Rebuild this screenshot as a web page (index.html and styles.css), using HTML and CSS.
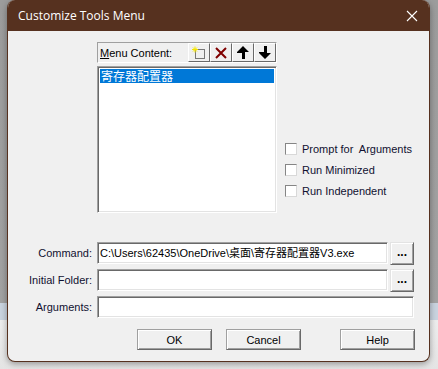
FILE: index.html
```html
<!DOCTYPE html>
<html lang="en">
<head>
  <meta charset="UTF-8">
  <title>Customize Tools Menu</title>
  <link rel="stylesheet" href="styles.css">
</head>
<body>

  <div class="dialog">
    <div class="titlebar">
      <span class="title">Customize Tools Menu</span>
      <svg class="close" width="12" height="12" viewBox="0 0 12 12">
        <path d="M1 1 L11 11 M11 1 L1 11" stroke="#fff" stroke-width="1.1"/>
      </svg>
    </div>

    <div class="client">
      <div class="top">
        <div class="listpane">
          <div class="listhead">
            <span class="listlabel"><u>M</u>enu Content:</span>
            <div class="tools">
              <button class="tool" title="New">
                <svg width="14" height="14" viewBox="0 0 14 14">
                  <rect x="3.5" y="3.5" width="9" height="9" fill="none" stroke="#000" stroke-dasharray="1 1"/>
                  <path d="M0 3.5 H6 M3 0.5 V6.5 M1 1.5 L5 5.5 M5 1.5 L1 5.5" stroke="#f5e600" stroke-width="1"/>
                </svg>
              </button>
              <button class="tool" title="Delete">
                <svg width="14" height="14" viewBox="0 0 14 14">
                  <path d="M2 2 L12 12 M12 2 L2 12" stroke="#800000" stroke-width="2"/>
                </svg>
              </button>
              <button class="tool" title="Move Up">
                <svg width="12" height="13" viewBox="0 0 12 13">
                  <polygon points="6,0 12,6 8,6 8,13 5,13 5,7 0,7 0,6" fill="#000"/>
                </svg>
              </button>
              <button class="tool" title="Move Down">
                <svg width="12" height="13" viewBox="0 0 12 13">
                  <polygon points="6,13 12,7 8,7 8,0 5,0 5,6 0,6 0,7" fill="#000"/>
                </svg>
              </button>
            </div>
          </div>
          <div class="listbox">
            <div class="item selected">寄存器配置器</div>
          </div>
        </div>

        <div class="options">
          <label class="check"><span class="box"></span>Prompt for&nbsp; Arguments</label>
          <label class="check"><span class="box"></span>Run Minimized</label>
          <label class="check"><span class="box"></span>Run Independent</label>
        </div>
      </div>

      <div class="fields">
        <label class="field-label">Command:</label>
        <div class="edit">C:\Users\62435\OneDrive\桌面\寄存器配置器V3.exe</div>
        <button class="browse">...</button>

        <label class="field-label">Initial Folder:</label>
        <div class="edit"></div>
        <button class="browse">...</button>

        <label class="field-label">Arguments:</label>
        <div class="edit wide"></div>
      </div>

      <div class="actions">
        <button class="push ok">OK</button>
        <button class="push cancel">Cancel</button>
        <button class="push help">Help</button>
      </div>
    </div>
  </div>

</body>
</html>
```

FILE: styles.css
```css
body {
  margin: 0;
  width: 438px;
  height: 369px;
  overflow: hidden;
  font-family: "Liberation Sans", Arial, sans-serif;
  font-size: 11px;
  color: #000;
  background:
    linear-gradient(to bottom,
      #9c9c9c 0, #a2a2a2 303px,
      #c9d3df 303px, #c9d3df 320px,
      #ededed 320px, #e4e4e4 369px);
}

.dialog {
  margin-left: 7px;
  width: 423px;
  height: 362px;
  box-sizing: border-box;
  border: 1px solid #56311f;
  border-top: none;
  border-radius: 8px;
  overflow: hidden;
  background: #f0f0f0;
  box-shadow: 0 2px 6px rgba(0,0,0,0.35);
}

.titlebar {
  height: 31px;
  background: #56311f;
  display: flex;
  align-items: center;
  padding: 0 10px 0 10px;
}

.title {
  font-family: "Open Sans", "Noto Sans", sans-serif;
  font-size: 12px;
  color: #fff;
  flex: 1;
}

.close {
  margin-right: 1px;
}

.client {
  padding-top: 11px;
}

.top {
  display: flex;
  margin-left: 89px;
}

.listpane {
  width: 180px;
}

.listhead {
  height: 21px;
  box-sizing: border-box;
  border: 1px solid;
  border-color: #a0a0a0 #fff #fff #a0a0a0;
  display: flex;
  align-items: center;
}

.listlabel {
  padding-left: 2px;
  flex: 1;
  font-size: 11px;
}

.tools {
  display: flex;
  height: 19px;
}

.tool {
  width: 22px;
  height: 19px;
  padding: 0;
  margin: 0;
  background: #f0f0f0;
  border: 1px solid;
  border-color: #fff #696969 #696969 #fff;
  display: flex;
  align-items: center;
  justify-content: center;
}

.listbox {
  margin-top: 3px;
  height: 147px;
  box-sizing: border-box;
  border: 1px solid;
  border-color: #a0a0a0 #fff #fff #a0a0a0;
  box-shadow: inset 1px 1px #696969, inset -1px -1px #e3e3e3;
  background: #fff;
  padding: 2px 2px;
}

.item {
  height: 14px;
  line-height: 14px;
  font-family: "Noto Sans CJK SC", sans-serif;
  font-size: 12px;
  padding-left: 1px;
}

.item.selected {
  background: #0078d7;
  color: #fff;
}

.options {
  margin-left: 8px;
  margin-top: 96px;
  display: flex;
  flex-direction: column;
}

.check {
  height: 21px;
  display: flex;
  align-items: center;
  color: #101030;
}

.box {
  width: 12px;
  height: 12px;
  box-sizing: border-box;
  background: #fff;
  border: 1px solid;
  border-color: #858585 #d8d8d8 #d8d8d8 #858585;
  margin-right: 5px;
}

.fields {
  margin-top: 29px;
  padding-right: 15px;
  display: grid;
  grid-template-columns: 89px 1fr 26px;
  row-gap: 4px;
}

.field-label {
  text-align: right;
  padding-right: 5px;
  line-height: 22px;
  color: #101030;
}

.edit {
  height: 22px;
  box-sizing: border-box;
  border: 1px solid;
  border-color: #a0a0a0 #fff #fff #a0a0a0;
  box-shadow: inset 1px 1px #696969, inset -1px -1px #e3e3e3;
  background: #fff;
  padding: 0 2px;
  line-height: 20px;
  font-family: "Liberation Sans", "Noto Sans CJK SC", sans-serif;
  white-space: nowrap;
  overflow: hidden;
}

.edit.wide {
  grid-column: 2 / 4;
}

.browse {
  margin-left: 2px;
  width: 24px;
  height: 23px;
  padding: 0 0 4px 0;
  background: #f0f0f0;
  border: 1px solid;
  border-color: #e3e3e3 #696969 #696969 #e3e3e3;
  box-shadow: inset 1px 1px #fff, inset -1px -1px #a0a0a0;
  font-family: "Liberation Sans", sans-serif;
  font-size: 12px;
  font-weight: bold;
  letter-spacing: 0;
}

.actions {
  margin-top: 11px;
  display: flex;
}

.push {
  width: 75px;
  height: 21px;
  padding: 0;
  background: #f0f0f0;
  border: 1px solid;
  border-color: #a0a0a0 #696969 #696969 #a0a0a0;
  box-shadow: inset 1px 1px #fff, inset -1px -1px #a0a0a0;
  font-family: "Liberation Sans", sans-serif;
  font-size: 11px;
  color: #000;
}

.ok {
  margin-left: 129px;
}

.cancel {
  margin-left: 14px;
}

.help {
  margin-left: 39px;
}
```
